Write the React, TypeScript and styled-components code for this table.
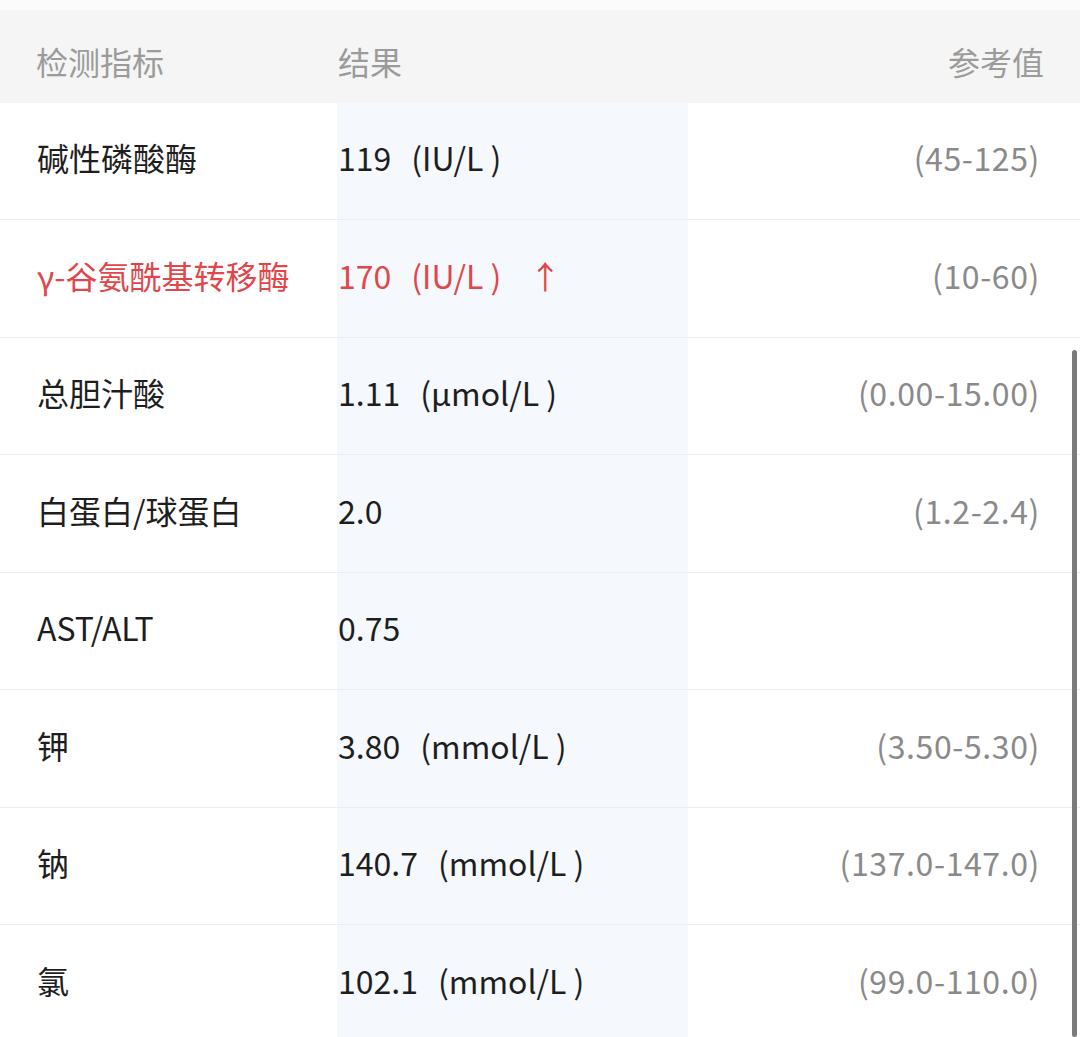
import React from "react";
import styled, { createGlobalStyle } from "styled-components";

const GlobalStyle = createGlobalStyle`
  html, body { margin: 0; padding: 0; background: #ffffff; }
  body { font-family: "Noto Sans CJK SC", "Noto Sans", sans-serif; }
  * { box-sizing: border-box; }
`;

const Page = styled.div`
  position: relative;
  width: 1080px;
  height: 1037px;
  overflow: hidden;
  padding-top: 10px;
  background: #fbfbfb;
`;

const Table = styled.div`
  display: flex;
  flex-direction: column;
  background: #ffffff;
`;

const HeaderRow = styled.div`
  display: grid;
  grid-template-columns: 337px 351px 1fr;
  align-items: center;
  height: 92.5px;
  padding-top: 10px;
  background: #f5f5f5;
  color: #9b9b9b;
  font-size: 32px;
`;

const Row = styled.div`
  display: grid;
  grid-template-columns: 337px 351px 1fr;
  height: 117.5px;
  border-bottom: 1px solid #ececec;
  font-size: 32px;
`;

const NameCell = styled.div<{ $alert?: boolean; $head?: boolean }>`
  display: flex;
  align-items: center;
  padding-left: ${(p) => (p.$head ? "36px" : "37px")};
  padding-bottom: ${(p) => (p.$head ? "0" : "7px")};
  color: ${(p) => (p.$alert ? "#e0474a" : p.$head ? "#9b9b9b" : "#1e1e1e")};
  white-space: nowrap;
`;

const ResultCell = styled.div<{ $alert?: boolean; $head?: boolean }>`
  display: flex;
  align-items: center;
  padding-left: 1px;
  padding-bottom: ${(p) => (p.$head ? "0" : "7px")};
  background: ${(p) => (p.$head ? "transparent" : "#f5f8fd")};
  color: ${(p) => (p.$alert ? "#e0474a" : p.$head ? "#9b9b9b" : "#1e1e1e")};
  white-space: nowrap;
`;

const Unit = styled.span`
  margin-left: 20px;
`;

const Arrow = styled.span`
  margin-left: 28px;
`;

const RefCell = styled.div<{ $head?: boolean }>`
  display: flex;
  align-items: center;
  justify-content: flex-end;
  padding-right: ${(p) => (p.$head ? "36px" : "40px")};
  padding-bottom: ${(p) => (p.$head ? "0" : "7px")};
  color: ${(p) => (p.$head ? "#9b9b9b" : "#8a8a8a")};
  white-space: nowrap;
  letter-spacing: ${(p) => (p.$head ? "0" : "0.6px")};
`;

const Scrollbar = styled.div`
  position: absolute;
  right: 3px;
  top: 350px;
  width: 5px;
  bottom: 0;
  border-radius: 3px;
  background: #7b7b7b;
`;

type Item = {
  name: string;
  value: string;
  unit?: string;
  range?: string;
  alert?: boolean;
};

const items: Item[] = [
  { name: "碱性磷酸酶", value: "119", unit: "(IU/L )", range: "(45-125)" },
  { name: "γ-谷氨酰基转移酶", value: "170", unit: "(IU/L )", range: "(10-60)", alert: true },
  { name: "总胆汁酸", value: "1.11", unit: "(µmol/L )", range: "(0.00-15.00)" },
  { name: "白蛋白/球蛋白", value: "2.0", range: "(1.2-2.4)" },
  { name: "AST/ALT", value: "0.75" },
  { name: "钾", value: "3.80", unit: "(mmol/L )", range: "(3.50-5.30)" },
  { name: "钠", value: "140.7", unit: "(mmol/L )", range: "(137.0-147.0)" },
  { name: "氯", value: "102.1", unit: "(mmol/L )", range: "(99.0-110.0)" },
];

export default function App() {
  return (
    <>
      <GlobalStyle />
      <Page>
        <Table>
          <HeaderRow>
            <NameCell $head>检测指标</NameCell>
            <ResultCell $head>结果</ResultCell>
            <RefCell $head>参考值</RefCell>
          </HeaderRow>
          {items.map((it) => (
            <Row key={it.name}>
              <NameCell $alert={it.alert}>{it.name}</NameCell>
              <ResultCell $alert={it.alert}>
                <span>{it.value}</span>
                {it.unit && <Unit>{it.unit}</Unit>}
                {it.alert && <Arrow>↑</Arrow>}
              </ResultCell>
              <RefCell>{it.range ?? ""}</RefCell>
            </Row>
          ))}
        </Table>
        <Scrollbar />
      </Page>
    </>
  );
}
